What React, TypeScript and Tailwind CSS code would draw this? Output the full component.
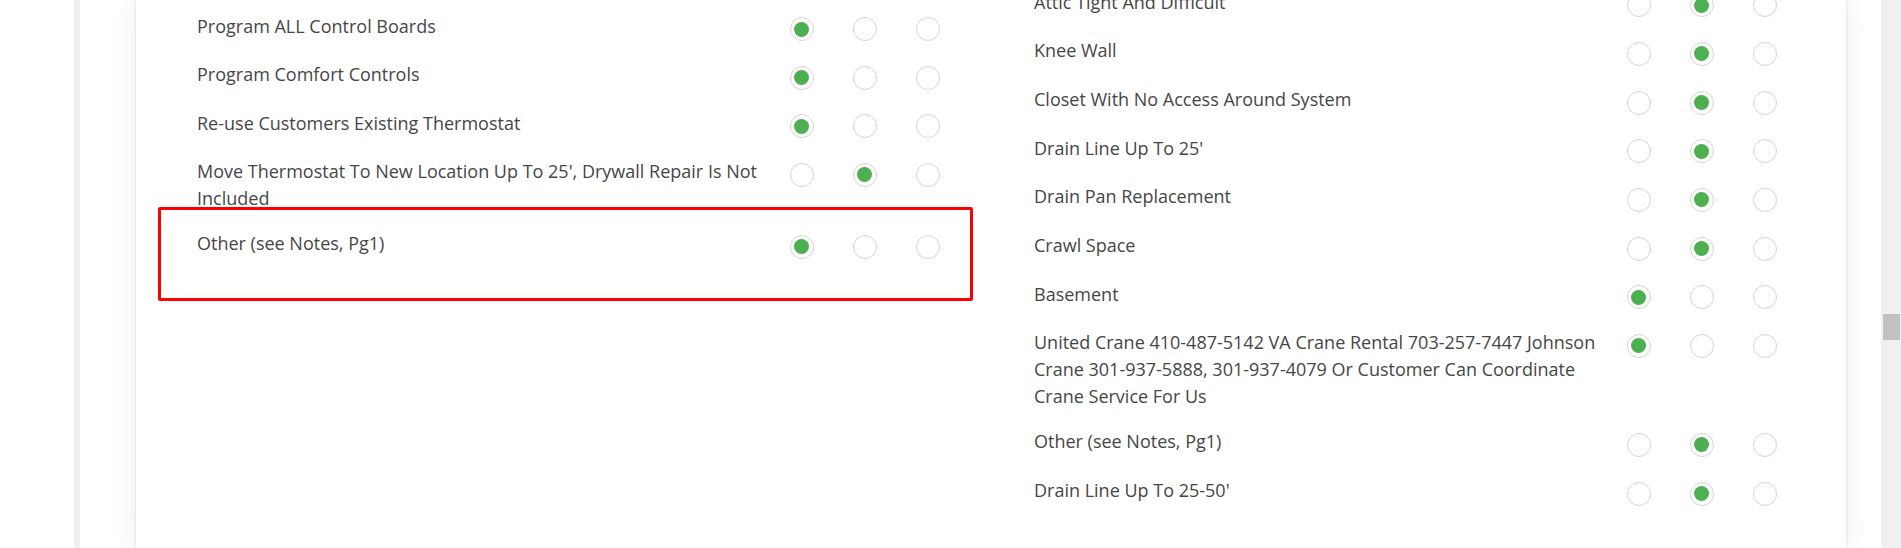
import React from "react";

type Item = { label: string; pick: number; boxed?: boolean };

const leftItems: Item[] = [
  { label: "Program ALL Control Boards", pick: 0 },
  { label: "Program Comfort Controls", pick: 0 },
  { label: "Re-use Customers Existing Thermostat", pick: 0 },
  { label: "Move Thermostat To New Location Up To 25', Drywall Repair Is Not Included", pick: 1 },
  { label: "Other (see Notes, Pg1)", pick: 0, boxed: true },
];

const rightItems: Item[] = [
  { label: "Attic Tight And Difficult", pick: 1 },
  { label: "Knee Wall", pick: 1 },
  { label: "Closet With No Access Around System", pick: 1 },
  { label: "Drain Line Up To 25'", pick: 1 },
  { label: "Drain Pan Replacement", pick: 1 },
  { label: "Crawl Space", pick: 1 },
  { label: "Basement", pick: 0 },
  {
    label:
      "United Crane 410-487-5142 VA Crane Rental 703-257-7447 Johnson Crane 301-937-5888, 301-937-4079 Or Customer Can Coordinate Crane Service For Us",
    pick: 0,
  },
  { label: "Other (see Notes, Pg1)", pick: 1 },
  { label: "Drain Line Up To 25-50'", pick: 1 },
];

function Radio({ checked }: { checked: boolean }) {
  return (
    <div className="w-[63px] flex justify-center pt-[4.5px] h-[30.67px]">
      <div className="w-6 h-6 rounded-full border border-[#d4d4d4] bg-white flex items-center justify-center">
        {checked && <div className="w-[15px] h-[15px] rounded-full bg-[#4caf50]" />}
      </div>
    </div>
  );
}

function Row({ item }: { item: Item }) {
  return (
    <div className="relative flex items-start pb-[18px]">
      {item.boxed && (
        // annotation drawn over the row
        <div className="absolute left-[-39px] top-[-23.5px] w-[815px] h-[94px] border-[3px] border-[#ff0000] rounded-[2px] pointer-events-none" />
      )}
      <div className="w-[573px] shrink-0 pr-2 leading-[27px]">{item.label}</div>
      {[0, 1, 2].map((i) => (
        <Radio key={i} checked={item.pick === i} />
      ))}
    </div>
  );
}

export default function App() {
  return (
    <div className="h-[548px] w-[1901px] overflow-hidden bg-white flex font-['Open_Sans',sans-serif] text-[18px] text-[#464646]">
      <div className="w-[74px] shrink-0 bg-white" />
      <div className="w-[6px] shrink-0 bg-[#f0f0f0]" />

      <div className="flex-1 pl-[56px] pr-[35px]">
        <div className="h-full bg-white shadow-[0_0_3px_rgba(0,30,60,0.14),0_0_26px_rgba(0,0,0,0.08)] pl-[61px]">
          <div className="grid grid-cols-[762px_762px] gap-x-[75px] items-start">
            <div className="mt-[12.5px]">
              {leftItems.map((it) => (
                <Row key={it.label} item={it} />
              ))}
            </div>
            <div className="mt-[-11.2px]">
              {rightItems.map((it, i) => (
                <Row key={i} item={it} />
              ))}
            </div>
          </div>
        </div>
      </div>

      <div className="w-[20px] shrink-0 bg-[#f0f0f0]">
        <div className="ml-[2px] mt-[314px] w-[17px] h-[26px] bg-[#c1c1c1]" />
      </div>
    </div>
  );
}
